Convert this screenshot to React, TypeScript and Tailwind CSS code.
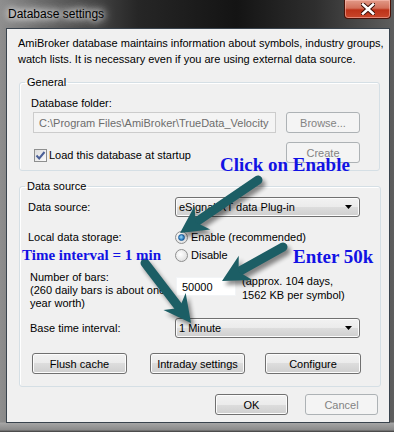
import React from "react";

const btn =
  "h-[21px] flex items-center justify-center rounded-[3px] border border-[#707070] bg-[linear-gradient(#f2f2f2_0%,#ebebeb_50%,#dddddd_50%,#cfcfcf_100%)] shadow-[inset_0_0_0_1px_#fcfcfc] text-black";
const btnOff =
  "h-[21px] flex items-center justify-center rounded-[3px] border border-[#adb2b5] bg-[#f4f4f4] text-[#838383]";
const combo =
  "h-[20px] flex items-center justify-between pl-[3px] pr-[7px] rounded-[3px] border border-[#707070] bg-[linear-gradient(#f2f2f2_0%,#ebebeb_50%,#dddddd_50%,#cfcfcf_100%)] shadow-[inset_0_0_0_1px_#fcfcfc]";
const note = "absolute font-['Liberation_Serif',serif] font-bold text-[#1212e4] whitespace-nowrap";

function Caret() {
  return (
    <svg width="7" height="4" viewBox="0 0 7 4">
      <path d="M0 0 H7 L3.5 4 Z" fill="#000" />
    </svg>
  );
}

function Radio({ on }: { on?: boolean }) {
  return (
    <span className="w-[13px] h-[13px] shrink-0 rounded-full border border-[#8e8f8f] bg-[radial-gradient(circle_at_40%_40%,#ffffff,#d7d7d7)] flex items-center justify-center">
      {on && (
        <span className="w-[7px] h-[7px] rounded-full border border-[#1b5d9c] bg-[radial-gradient(circle_at_45%_40%,#9be0ff,#2a7dc4_70%,#1a5f9f)]" />
      )}
    </span>
  );
}

// teal arrow with blurred shadow, tail -> tip
function Arrow({ x1, y1, x2, y2 }: { x1: number; y1: number; x2: number; y2: number }) {
  const len = Math.hypot(x2 - x1, y2 - y1);
  const ux = (x2 - x1) / len;
  const uy = (y2 - y1) / len;
  const px = -uy;
  const py = ux;
  const L = 27;
  const H = 14;
  const pts = [
    [x2, y2],
    [x2 - ux * L + px * H, y2 - uy * L + py * H],
    [x2 - ux * (L - 8), y2 - uy * (L - 8)],
    [x2 - ux * L - px * H, y2 - uy * L - py * H],
  ]
    .map((p) => p.join(","))
    .join(" ");
  const sx = x2 - ux * (L - 9);
  const sy = y2 - uy * (L - 9);
  return (
    <g>
      <g transform="translate(3 4)" filter="url(#blur)" opacity="0.45">
        <line x1={x1} y1={y1} x2={sx} y2={sy} stroke="#000" strokeWidth="9" strokeLinecap="round" />
        <polygon points={pts} fill="#000" />
      </g>
      <line x1={x1} y1={y1} x2={sx} y2={sy} stroke="#1c5e65" strokeWidth="9" strokeLinecap="round" />
      <polygon points={pts} fill="#1c5e65" />
    </g>
  );
}

export default function App() {
  return (
    <div className="relative w-[394px] h-[432px] overflow-hidden flex flex-col whitespace-nowrap font-['Liberation_Sans',Arial,sans-serif] text-[11px] leading-[16px] text-black bg-[linear-gradient(180deg,transparent_97.6%,#a4a4a4_98%,#8a8a8a_99.5%,#3a3a3a_100%),linear-gradient(90deg,#8e8e8e_0%,#6a6a6a_10%,#262626_35%,#141414_60%,#2e2e2e_80%,#5e5e5e_100%)]">
      {/* title bar */}
      <div className="h-[28px] shrink-0 flex items-start justify-between">
        <span className="ml-[8px] mt-[6px] text-[12px] [text-shadow:0_0_6px_#fff,0_0_10px_#fff,0_0_14px_#ddd]">
          Database settings
        </span>
        <div className="mr-[3px] w-[47px] h-[19px] rounded-b-[4px] border border-t-0 border-[#4a1208] bg-[linear-gradient(#e29a88_0%,#d2705a_45%,#bd3218_55%,#c8462b_100%)] shadow-[inset_0_0_0_1px_rgba(255,200,190,0.5)] flex items-center justify-center">
          <svg width="14" height="12" viewBox="0 0 14 12">
            <path d="M2 1.5 L12 10.5 M12 1.5 L2 10.5" stroke="#3a0d05" strokeWidth="4.5" strokeLinecap="square" />
            <path d="M2 1.5 L12 10.5 M12 1.5 L2 10.5" stroke="#fff" strokeWidth="2.6" strokeLinecap="square" />
          </svg>
        </div>
      </div>

      {/* client area */}
      <div className="flex-1 ml-[6px] mr-[4px] mb-[9px] border border-[#39434d] bg-[#f0f0f0] flex flex-col">
        <p className="pl-[11px] pt-[6px]">
          AmiBroker database maintains information about symbols, industry groups,
          <br />
          watch lists. It is necessary even if you are using external data source.
        </p>

        {/* General */}
        <fieldset className="mt-[7px] ml-[12px] mr-[9px] p-0 border border-[#d5dfe5] rounded-[3px] shadow-[inset_1px_1px_0_#fff]">
          <legend className="ml-[5px] px-[2px]">General</legend>
          <div className="pl-[11px] pr-[19px] pt-[5px] pb-[7px]">
            <div>Database folder:</div>
            <div className="mt-[1px] flex">
              <div className="ml-[2px] w-[243px] h-[21px] pl-[5px] flex items-center border border-[#cccccc] bg-[#f4f4f4] text-[#6d6d6d]">
                C:\Program Files\AmiBroker\TrueData_Velocity
              </div>
              <div className={`${btnOff} ml-auto w-[74px]`}>Browse...</div>
            </div>
            <div className="mt-[9px] flex items-end justify-between">
              <div className="ml-[3px] flex items-center gap-[2px]">
                <span className="w-[13px] h-[13px] border border-[#8e8f8f] bg-[linear-gradient(135deg,#dcdcdc,#fbfbfb)] flex items-center justify-center">
                  <svg width="11" height="11" viewBox="0 0 11 11">
                    <path d="M1.5 5.5 L4.2 8.5 L9.5 2" fill="none" stroke="#4a5f97" strokeWidth="2" />
                  </svg>
                </span>
                <span>Load this database at startup</span>
              </div>
              <div className={`${btnOff} w-[74px]`}>Create</div>
            </div>
          </div>
        </fieldset>

        {/* Data source */}
        <fieldset className="mt-[7px] ml-[12px] mr-[9px] p-0 border border-[#d5dfe5] rounded-[3px] shadow-[inset_1px_1px_0_#fff]">
          <legend className="ml-[5px] px-[2px]">Data source</legend>
          <div className="pl-[8px] pr-[19px] pt-[3px] pb-[12px]">
            <div className="flex items-center">
              <span className="w-[147px]">Data source:</span>
              <div className={`${combo} w-[185px]`}>
                <span>eSignal RT data Plug-in</span>
                <Caret />
              </div>
            </div>
            <div className="mt-[11px] flex">
              <span className="w-[147px] h-[18px] flex items-center">Local data storage:</span>
              <div className="flex flex-col">
                <div className="h-[18px] flex items-center gap-[3px]">
                  <Radio on />
                  <span>Enable (recommended)</span>
                </div>
                <div className="h-[18px] flex items-center gap-[3px]">
                  <Radio />
                  <span>Disable</span>
                </div>
              </div>
            </div>
            <div className="mt-[7px] flex">
              <span className="ml-[2px] w-[146px] leading-[13px]">
                Number of bars:
                <br />
                (260 daily bars is about one
                <br />
                year worth)
              </span>
              <div className="mt-[6px] w-[60px] h-[19px] pl-[5px] flex items-center bg-white border border-[#f2f4f6]">
                50000
              </div>
              <span className="ml-[6px] mt-[3px] leading-[14px]">
                (approx. 104 days,
                <br />
                1562 KB per symbol)
              </span>
            </div>
            <div className="mt-[8px] flex items-center">
              <span className="ml-[2px] w-[145px]">Base time interval:</span>
              <div className={`${combo} w-[185px]`}>
                <span>1 Minute</span>
                <Caret />
              </div>
            </div>
            <div className="mt-[15px] flex">
              <div className={`${btn} ml-[4px] w-[95px]`}>Flush cache</div>
              <div className={`${btn} ml-[23px] w-[95px]`}>Intraday settings</div>
              <div className={`${btn} ml-[20px] w-[96px]`}>Configure</div>
            </div>
          </div>
        </fieldset>

        <div className="mt-[7px] mr-[11px] flex justify-end gap-[17px]">
          <div className={`${btn} w-[73px] border-[#3c7fb1] shadow-[inset_0_0_0_1px_#48d8fb]`}>OK</div>
          <div className={`${btnOff} w-[73px]`}>Cancel</div>
        </div>
      </div>

      {/* annotations drawn over the dialog */}
      <svg className="absolute inset-0 pointer-events-none" width="394" height="432">
        <defs>
          <filter id="blur" x="-20%" y="-20%" width="140%" height="140%">
            <feGaussianBlur stdDeviation="2" />
          </filter>
        </defs>
        <Arrow x1={258} y1={180} x2={180} y2={233} />
        <Arrow x1={283} y1={247} x2={222} y2={281} />
        <Arrow x1={145} y1={263} x2={191} y2={323} />
      </svg>
      <span className={`${note} left-[220px] top-[154px] text-[19px] leading-[22px]`}>Click on Enable</span>
      <span className={`${note} left-[293px] top-[246px] text-[19px] leading-[22px]`}>Enter 50k</span>
      <span className={`${note} left-[22px] top-[246px] text-[15px] leading-[18px]`}>Time interval = 1 min</span>
    </div>
  );
}
